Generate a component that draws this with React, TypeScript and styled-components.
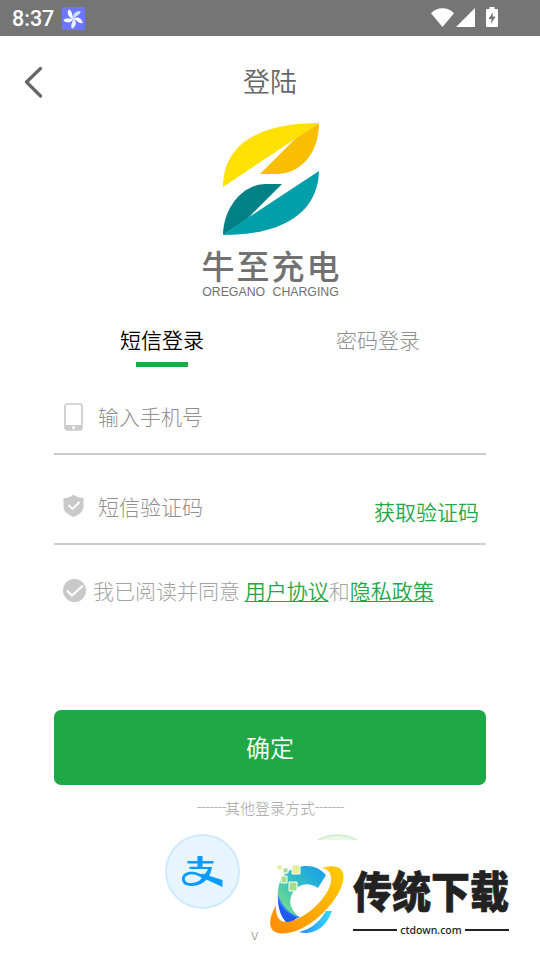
import React from "react";
import styled, { createGlobalStyle } from "styled-components";

const GlobalStyle = createGlobalStyle`
  * { box-sizing: border-box; }
  body {
    margin: 0;
    background: #fff;
    font-family: "Noto Sans CJK SC", "Noto Sans", sans-serif;
    font-weight: 300;
  }
`;

const Screen = styled.main`
  position: relative;
  width: 540px;
  height: 960px;
  overflow: hidden;
  display: flex;
  flex-direction: column;
  background: #fff;
`;

const StatusBar = styled.div`
  height: 36px;
  flex: none;
  display: flex;
  align-items: center;
  padding: 0 41px 0 12px;
  background: #757575;
  color: #fff;
`;

const Clock = styled.span`
  font: 500 21.5px/36px Roboto, sans-serif;
  width: 50px;
  padding-top: 2px;
`;

const StatusIcons = styled.div`
  margin-left: auto;
  height: 36px;
`;

const Header = styled.header`
  height: 87px;
  flex: none;
  display: grid;
  grid-template-columns: 68px 1fr 68px;
  align-items: center;
  padding-top: 4px;
  color: #666;
`;

const BackButton = styled.button`
  border: 0;
  padding: 0 0 0 23px;
  background: none;
  height: 32px;
  text-align: left;
`;

const Title = styled.h1`
  margin: 0 0 2px;
  font-size: 27px;
  line-height: 40px;
  font-weight: 350;
  text-align: center;
`;

const Brand = styled.section`
  height: 192px;
  flex: none;
  display: flex;
  flex-direction: column;
  align-items: center;
  padding-left: 1px;
  color: #727171;
`;

const BrandName = styled.div`
  margin-top: 9px;
  width: 138px;
  font-size: 33px;
  line-height: 40px;
  font-weight: 500;
  display: flex;
  justify-content: space-between;
`;

const BrandLatin = styled.div`
  font: 12.3px/14px "Liberation Sans", sans-serif;
  word-spacing: 4px;
  white-space: nowrap;
`;

const Tabs = styled.nav`
  height: 67px;
  flex: none;
  display: grid;
  grid-template-columns: 1fr 1fr;
  padding: 9px 54px 0;
`;

const Tab = styled.div<{ $active?: boolean }>`
  display: flex;
  flex-direction: column;
  align-items: center;
  font-size: 21px;
  line-height: 31px;
  font-weight: ${(p) => (p.$active ? 350 : 300)};
  color: ${(p) => (p.$active ? "#000" : "#8f8f8f")};
  &::after {
    content: "";
    width: 52px;
    height: 5px;
    margin-top: 7px;
    background: ${(p) => (p.$active ? "#21a846" : "transparent")};
  }
`;

const Form = styled.form`
  height: 328px;
  flex: none;
  padding: 1px 54px 0;
`;

const Field = styled.div<{ $height: number }>`
  height: ${(p) => p.$height}px;
  border-bottom: 2px solid #ccc;
  display: flex;
  align-items: flex-end;
  padding: 0 7px 20px 9px;
  font-size: 21px;
  line-height: 34px;
  color: #8f8f8f;
`;

const FieldIcon = styled.svg`
  width: 22px;
  height: 34px;
  margin: 0 13px -1px 0;
`;

const CodeButton = styled.span`
  margin: 0 0 -5px auto;
  font-weight: 350;
  color: #21a846;
`;

const Agreement = styled.div`
  height: 94px;
  display: flex;
  align-items: center;
  padding: 0 0 3px 8px;
  font-size: 21px;
  line-height: 32px;
  color: #a3a3a3;
  white-space: pre;
`;

const AgreementText = styled.span`
  margin-bottom: 2px;
`;

const CheckIcon = styled.svg`
  width: 25px;
  height: 25px;
  margin-right: 6px;
`;

const PolicyLink = styled.a`
  color: #21a846;
  font-weight: 350;
  text-decoration: underline;
  text-decoration-thickness: 1px;
  text-underline-offset: 2px;
`;

const Submit = styled.button`
  height: 75px;
  flex: none;
  margin: 0 54px;
  padding: 0 0 2px;
  border: 0;
  border-radius: 7px;
  background: #21a846;
  color: #fff;
  font: 350 24px/36px "Noto Sans CJK SC", sans-serif;
`;

const Alternatives = styled.div`
  display: flex;
  align-items: center;
  justify-content: center;
  height: 22px;
  margin-top: 11px;
  font-size: 15px;
  color: #a3a3a3;
`;

const Dashes = styled.span`
  width: 28px;
  overflow: visible;
  white-space: nowrap;
  font-family: Roboto, sans-serif;
  letter-spacing: -0.1px;
`;

const Providers = styled.div`
  display: flex;
  justify-content: space-between;
  width: 210px;
  margin: 16px auto 0;
`;

const Provider = styled.div<{ $fill: string; $edge: string }>`
  width: 75px;
  height: 75px;
  border: 2px solid ${(p) => p.$edge};
  border-radius: 50%;
  background: ${(p) => p.$fill};
  display: flex;
  align-items: center;
  justify-content: center;
`;

const Version = styled.div`
  margin: 16px 0 0 251px;
  font-size: 15px;
  line-height: 18px;
  color: #8f8f8f;
`;

const Watermark = styled.aside`
  position: absolute;
  left: 259px;
  right: 0;
  top: 840px;
  bottom: 0;
  background: #fff;
  display: flex;
  padding: 20px 0 0 7px;
`;

const WatermarkText = styled.div`
  width: 156px;
  margin-left: 7px;
  color: #222;
`;

const WatermarkTitle = styled.div`
  height: 42px;
  margin: 9px 0;
  font-size: 39px;
  line-height: 40px;
  font-weight: 900;
  white-space: nowrap;
  transform: scaleY(1.12);
  -webkit-text-stroke: 0.6px #222;
`;

const WatermarkDomain = styled.div`
  display: flex;
  align-items: center;
  gap: 3px;
  height: 20px;
  font: 500 10.500px/16px "Noto Sans", sans-serif;
  &::before,
  &::after {
    content: "";
    flex: 1;
    height: 2px;
    background: #222;
  }
`;

const fanBlades = [
  { angle: 0, color: "#c8e4ff" },
  { angle: 72, color: "#ffffff" },
  { angle: 144, color: "#e6f6ff" },
  { angle: 216, color: "#f4fdff" },
  { angle: 288, color: "#ffffff" },
];

function Fan() {
  return (
    <svg width="23" height="23" viewBox="0 0 23 23">
      <rect width="23" height="23" fill="#6c76f7" />
      {fanBlades.map((blade) => (
        <path
          key={blade.angle}
          d="M11.500 11.500C10.500 7.500 13 3.500 18.500 4 19 7.500 15 8.500 11.500 11.500Z"
          fill={blade.color}
          transform={`rotate(${blade.angle} 11.500 11.500)`}
        />
      ))}
    </svg>
  );
}

function DeviceStatus() {
  return (
    <svg width="70" height="36" viewBox="0 0 70 36" fill="#fff">
      <path d="M2 13.2C8 6.6 19 6.6 25 13.2L13.5 27Z" />
      <path d="M27 27 46 8V27Z" />
      <path d="M60.5 7h5v2H68q1 0 1 1v16q0 1-1 1H58q-1 0-1-1V10q0-1 1-1h2.500Z" />
      <path d="m64 12-4.500 7h3L62 24l4.500-7.500h-3Z" fill="#757575" />
    </svg>
  );
}

function LeafMark() {
  return (
    <svg width="98" height="113" viewBox="0 0 98 113">
      <path d="M1 64C1 21 38 0 97 0Z" fill="#ffe100" />
      <path d="M97 0C97 31 78 51 54 51H38L73 16Z" fill="#f9be00" />
      <path d="M97 48C96 87 65 112 1 112L27 94Z" fill="#009faa" />
      <path d="M1 112C1 87 19 61 44 61H60L26 95Z" fill="#008186" />
    </svg>
  );
}

function AlipayMark() {
  return (
    <svg width="42" height="34" viewBox="0 0 42 34">
      <path d="M15.500 1h5v5H31.500v2.500h-11V12H30q-1 7-5 12-6 7-15 7C4 31 0 29 0 24c0-6 6-8 13-7l9 3q3-3 4-6H7.500v-2.200h8V8.500h-10V6h10ZM20 23c-5-3-10-5-14-3-5 2-4 8 2 8 5 0 9-1 12-5Z" fill="#0a9bff" fillRule="evenodd" />
      <path d="M20 18.500 40.500 25V32L20 22.500Z" fill="#0a9bff" />
    </svg>
  );
}

function OrbitMark() {
  return (
    <svg width="80" height="80" viewBox="266 860 80 80">
      <defs>
        <linearGradient id="arc" x1="0" x2="1" y1="1" y2="0">
          <stop stopColor="#8ae77b" />
          <stop offset=".5" stopColor="#35bfc1" />
          <stop offset="1" stopColor="#129cf2" />
        </linearGradient>
        <linearGradient id="ring" x1="0" x2="1" y1="1" y2="0">
          <stop stopColor="#ff8a08" />
          <stop offset="1" stopColor="#ffce00" />
        </linearGradient>
        <linearGradient id="base">
          <stop stopColor="#2589ff" />
          <stop offset="1" stopColor="#39dcff" />
        </linearGradient>
      </defs>
      <path d="M278 891C277 906 280 917 288 924L299 917C286 912 281 902 278 891Z" fill="#1c5af0" />
      <path d="M278 896C277 875 291 866 307 866q11 0 19 9l-8 13c-10-7-21-4-26 6-4 8-1 16 7 23-12-4-19-12-21-21Z" fill="url(#arc)" />
      <path d="M278 895c5 12 12 19 22 22l-2 1c-10-4-18-11-20-20Z" fill="#368ef4" />
      <path d="M299 932c13-3 22-12 27-21h6c-5 15-17 25-33 21Z" fill="url(#base)" />
      <path d="M322 868c20-6 27 4 17 24-10 19-32 38-51 41-20 3-22-10-12-28-1 17 8 21 23 13 18-9 34-29 32-41-1-6-4-8-9-9Z" fill="url(#ring)" />
      <g stroke="#fff">
        <path d="M292 865h8v9h-8Z" fill="#e2ee9a" />
        <path d="M289 882h8v9h-8ZM281 876h6v7h-6ZM283 868h5v5h-5Z" fill="#a5df89" />
        <path d="M277 865h5v5h-5Z" fill="#e2ee9a" />
      </g>
    </svg>
  );
}

export default function App() {
  return (
    <>
      <GlobalStyle />
      <Screen>
        <StatusBar>
          <Clock>8:37</Clock>
          <Fan />
          <StatusIcons><DeviceStatus /></StatusIcons>
        </StatusBar>
        <Header>
          <BackButton aria-label="返回">
            <svg width="22" height="32" viewBox="0 0 22 32" fill="none" stroke="#666" strokeWidth="3.200" strokeLinecap="round" strokeLinejoin="round">
              <path d="M17.500 2.500 3.500 16l14 14" />
            </svg>
          </BackButton>
          <Title>登陆</Title>
        </Header>
        <Brand>
          <LeafMark />
          <BrandName><span>牛</span><span>至</span><span>充</span><span>电</span></BrandName>
          <BrandLatin>OREGANO CHARGING</BrandLatin>
        </Brand>
        <Tabs>
          <Tab $active>短信登录</Tab>
          <Tab>密码登录</Tab>
        </Tabs>
        <Form>
          <Field $height={72}>
            <FieldIcon viewBox="0 0 22 34">
              <rect x="2" y="4" width="17" height="26" rx="2.500" fill="none" stroke="#ccc" strokeWidth="1.700" />
              <path d="M2 25h17v3q0 2-2 2H4q-2 0-2-2Z" fill="#ccc" />
              <circle cx="10.500" cy="27.500" r="1.500" fill="#fff" />
            </FieldIcon>
            输入手机号
          </Field>
          <Field $height={90}>
            <FieldIcon viewBox="0 0 22 34">
              <path d="m10.500 4.500 2 1.500q3 2 8 2v8q0 7.500-10 11Q.5 23.500.5 16V8q5.500 0 8-2Z" fill="#c9c9c9" />
              <path d="m5.500 15 4 4 7-7" fill="none" stroke="#fff" strokeWidth="1.800" />
            </FieldIcon>
            短信验证码
            <CodeButton>获取验证码</CodeButton>
          </Field>
          <Agreement>
            <CheckIcon viewBox="0 0 25 25">
              <circle cx="12.500" cy="12.500" r="11.500" fill="#c9c9c9" />
              <path d="m5 12.500 5 5 11-10" fill="none" stroke="#fff" strokeWidth="2.200" />
            </CheckIcon>
            <AgreementText>我已阅读并同意 <PolicyLink>用户协议</PolicyLink>和<PolicyLink>隐私政策</PolicyLink></AgreementText>
          </Agreement>
        </Form>
        <Submit>确定</Submit>
        <Alternatives>
          <Dashes>-------</Dashes>其他登录方式<Dashes>-------</Dashes>
        </Alternatives>
        <Providers>
          <Provider $fill="#e7f5ff" $edge="#d0eafd"><AlipayMark /></Provider>
          <Provider $fill="#e9f8e9" $edge="#d2f0d2" />
        </Providers>
        <Version>v</Version>
        <Watermark>
          <OrbitMark />
          <WatermarkText>
            <WatermarkTitle>传统下载</WatermarkTitle>
            <WatermarkDomain>ctdown.com</WatermarkDomain>
          </WatermarkText>
        </Watermark>
      </Screen>
    </>
  );
}
